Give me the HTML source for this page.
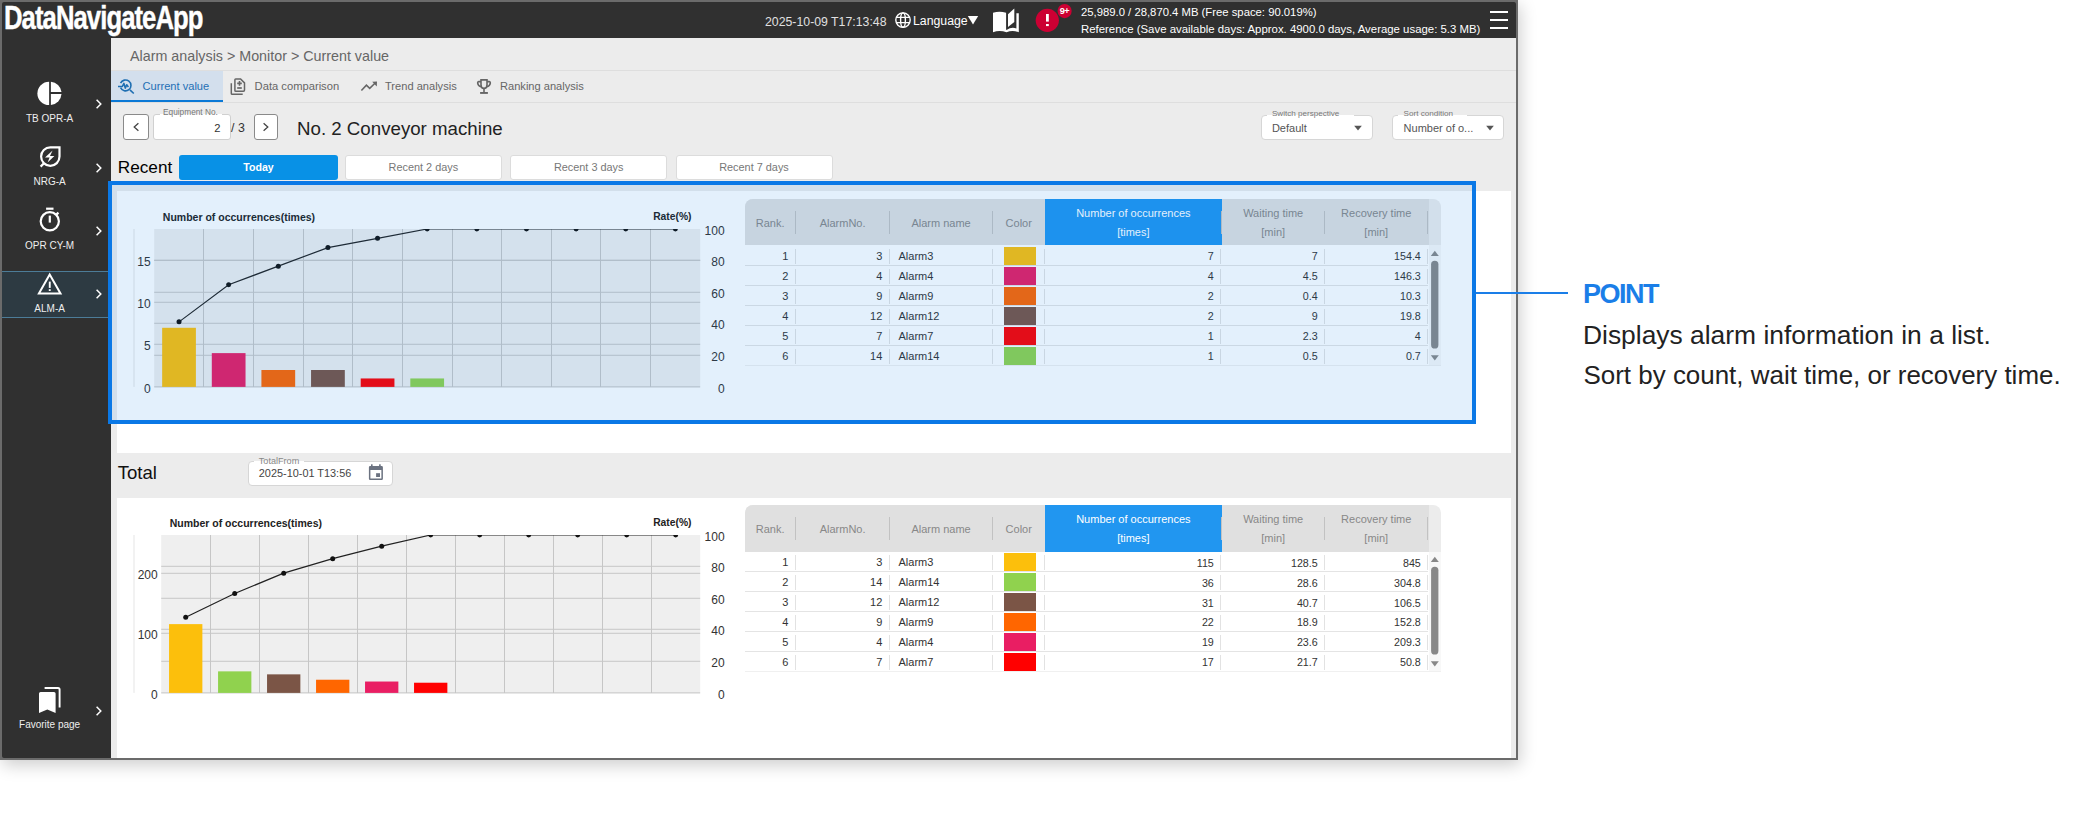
<!DOCTYPE html><html><head><meta charset="utf-8"><style>
html,body{margin:0;padding:0;background:#fff;width:2100px;height:820px;overflow:hidden;font-family:"Liberation Sans", sans-serif;}
</style></head><body>
<div style="position:absolute;left:0px;top:0px;width:1518px;height:760px;box-shadow:2px 5px 16px rgba(0,0,0,0.2);background:#6b6b6b;"></div>
<div style="position:absolute;left:2px;top:2px;width:1514px;height:756px;background:#303030;border-radius:2px;"></div>
<div style="position:absolute;left:4px;top:0.5px;font-size:33px;line-height:33px;font-weight:700;color:#fff;white-space:nowrap;letter-spacing:-1.2px;transform-origin:0 0;transform:scaleX(0.778);-webkit-text-stroke:0.4px #fff;">DataNavigateApp</div>
<div style="position:absolute;left:765px;top:15.74px;font-size:12.3px;line-height:12.3px;font-weight:400;color:#e0e0e0;white-space:nowrap;">2025-10-09 T17:13:48</div>
<svg style="position:absolute;left:893px;top:10px;" width="20" height="20" viewBox="893 10 20 20"><g fill="none" stroke="#fff" stroke-width="1.4"><circle cx="903" cy="20.1" r="7.2"/><ellipse cx="903" cy="20.1" rx="2.4" ry="7.2"/><path d="M896.2 17.4 H909.8 M896.2 22.6 H909.8"/></g></svg>
<div style="position:absolute;left:913px;top:14.94px;font-size:12.3px;line-height:12.3px;font-weight:400;color:#fff;white-space:nowrap;">Language</div>
<svg style="position:absolute;left:966px;top:14px;" width="14" height="12" viewBox="966 14 14 12"><polygon points="967.8,16 978.2,16 973,24.4" fill="#fff"/></svg>
<svg style="position:absolute;left:990px;top:6px;" width="32" height="30" viewBox="990 6 32 30"><g fill="#fff"><path d="M993 12.8 Q999.5 10.8 1006.1 12.8 V29.6 L1006.5 29.9 Q1011.5 26.6 1016.4 28.4 V13.2 H1018.8 V32.2 Q1012.5 29.6 1006.5 32.2 Q999.5 29.6 993 32.2 Z"/><polygon points="1008,14.2 1014.3,8.5 1014.3,22 1008,26.9"/></g></svg>
<svg style="position:absolute;left:1030px;top:2px;" width="46" height="34" viewBox="1030 2 46 34"><circle cx="1047.3" cy="20.35" r="11.6" fill="#cc0033"/><rect x="1046" y="14" width="2.8" height="7.6" fill="#fff"/><rect x="1046" y="24" width="2.8" height="2.1" fill="#fff"/><circle cx="1064.6" cy="11.1" r="7.1" fill="#cc0033"/></svg>
<div style="position:absolute;left:764.5px;width:600px;text-align:center;top:7.08px;font-size:9.2px;line-height:9.2px;font-weight:700;color:#fff;white-space:nowrap;letter-spacing:-0.4px;">9+</div>
<div style="position:absolute;left:1081px;top:6.70px;font-size:11.3px;line-height:11.3px;font-weight:400;color:#fff;white-space:nowrap;">25,989.0 / 28,870.4 MB (Free space: 90.019%)</div>
<div style="position:absolute;left:1081px;top:23.91px;font-size:11.4px;line-height:11.4px;font-weight:400;color:#fff;white-space:nowrap;">Reference (Save available days: Approx. 4900.0 days, Average usage: 5.3 MB)</div>
<div style="position:absolute;left:1490px;top:11.2px;width:18px;height:2px;background:#fff;"></div>
<div style="position:absolute;left:1490px;top:19.2px;width:18px;height:2px;background:#fff;"></div>
<div style="position:absolute;left:1490px;top:27.4px;width:18px;height:2px;background:#fff;"></div>
<div style="position:absolute;left:2px;top:270.6px;width:108.7px;height:47.8px;background:#2d3a42;border-top:1.5px solid #4c7c98;border-bottom:1.5px solid #4c7c98;box-sizing:border-box;"></div>
<svg style="position:absolute;left:36px;top:80px;" width="28" height="28" viewBox="36 80 28 28"><g fill="#fff"><path d="M49.1 81.7 A11.7 11.7 0 0 0 49.1 105.1 Z"/><path d="M50.9 81.8 A11.7 11.7 0 0 1 61.5 92.1 H50.9 Z"/><path d="M50.9 94.1 H61.5 A11.7 11.7 0 0 1 50.9 105 Z"/></g></svg>
<div style="position:absolute;left:-250.4px;width:600px;text-align:center;top:113.50px;font-size:10px;line-height:10px;font-weight:400;color:#eee;white-space:nowrap;">TB OPR-A</div>
<svg style="position:absolute;left:94px;top:98.4px;" width="10" height="12" viewBox="94 98.4 10 12"><polyline points="96.6,100.2 100.8,104.4 96.6,108.60000000000001" fill="none" stroke="#fff" stroke-width="1.5"/></svg>
<svg style="position:absolute;left:36px;top:142px;" width="28" height="28" viewBox="36 142 28 28"><g fill="none" stroke="#fff" stroke-width="2.2"><path d="M50.3 147.4 H59.5 V156.6 A9.2 9.2 0 1 1 50.3 147.4 Z"/><line x1="44" y1="163.2" x2="40.6" y2="166.6"/></g><polygon fill="#fff" points="52.6,150.6 45,157.6 49.6,157.5 47.6,162.6 54.4,156 50,156.1"/></svg>
<div style="position:absolute;left:-250.4px;width:600px;text-align:center;top:177.40px;font-size:10px;line-height:10px;font-weight:400;color:#eee;white-space:nowrap;">NRG-A</div>
<svg style="position:absolute;left:94px;top:161.8px;" width="10" height="12" viewBox="94 161.8 10 12"><polyline points="96.6,163.60000000000002 100.8,167.8 96.6,172.0" fill="none" stroke="#fff" stroke-width="1.5"/></svg>
<svg style="position:absolute;left:36px;top:204px;" width="28" height="32" viewBox="36 204 28 32"><g fill="none" stroke="#fff" stroke-width="2.2"><circle cx="49.8" cy="221.3" r="9.1"/><line x1="49.8" y1="215.6" x2="49.8" y2="222.6"/><line x1="56.4" y1="214.6" x2="58.4" y2="212.6"/></g><rect x="46.1" y="207.6" width="7.4" height="2.2" fill="#fff"/></svg>
<div style="position:absolute;left:-250.4px;width:600px;text-align:center;top:241.40px;font-size:10px;line-height:10px;font-weight:400;color:#eee;white-space:nowrap;">OPR CY-M</div>
<svg style="position:absolute;left:94px;top:225px;" width="10" height="12" viewBox="94 225 10 12"><polyline points="96.6,226.8 100.8,231 96.6,235.2" fill="none" stroke="#fff" stroke-width="1.5"/></svg>
<svg style="position:absolute;left:34px;top:270px;" width="32" height="28" viewBox="34 270 32 28"><polygon points="49.7,274.4 38.9,293.4 60.5,293.4" fill="none" stroke="#fff" stroke-width="2" stroke-linejoin="miter"/><rect x="48.8" y="281.6" width="1.9" height="6.3" fill="#fff"/><rect x="48.8" y="289.2" width="1.9" height="1.8" fill="#fff"/></svg>
<div style="position:absolute;left:-250.4px;width:600px;text-align:center;top:304.10px;font-size:10px;line-height:10px;font-weight:400;color:#eee;white-space:nowrap;">ALM-A</div>
<svg style="position:absolute;left:94px;top:288.4px;" width="10" height="12" viewBox="94 288.4 10 12"><polyline points="96.6,290.2 100.8,294.4 96.6,298.59999999999997" fill="none" stroke="#fff" stroke-width="1.5"/></svg>
<svg style="position:absolute;left:36px;top:684px;" width="28" height="32" viewBox="36 684 28 32"><g fill="#fff"><path d="M40.6 692 H54 Q55.6 692 55.6 693.6 V713 L47.3 709.4 L39 713 V693.6 Q39 692 40.6 692 Z"/></g><path d="M44.6 688 H58 Q59.6 688 59.6 689.6 V707.6" fill="none" stroke="#fff" stroke-width="1.9"/></svg>
<div style="position:absolute;left:-250.4px;width:600px;text-align:center;top:720.10px;font-size:10px;line-height:10px;font-weight:400;color:#eee;white-space:nowrap;">Favorite page</div>
<svg style="position:absolute;left:94px;top:704.7px;" width="10" height="12" viewBox="94 704.7 10 12"><polyline points="96.6,706.5 100.8,710.7 96.6,714.9000000000001" fill="none" stroke="#fff" stroke-width="1.5"/></svg>
<div style="position:absolute;left:110.7px;top:38px;width:1405.3px;height:720px;background:#ececec;"></div>
<div style="position:absolute;left:130px;top:48.55px;font-size:14.3px;line-height:14.3px;font-weight:400;color:#666;white-space:nowrap;">Alarm analysis &gt; Monitor &gt; Current value</div>
<div style="position:absolute;left:110.7px;top:70.4px;width:1405.3px;height:1px;background:#dedede;"></div>
<div style="position:absolute;left:110.7px;top:101.9px;width:1405.3px;height:1px;background:#dedede;"></div>
<div style="position:absolute;left:110.7px;top:71.4px;width:112px;height:28.6px;background:#d3dfed;"></div>
<div style="position:absolute;left:110.7px;top:99.6px;width:112px;height:2.6px;background:#0b79d6;"></div>
<svg style="position:absolute;left:114px;top:76px;" width="24" height="22" viewBox="114 76 24 22"><g fill="none" stroke="#1f6fb2" stroke-width="1.6" stroke-linejoin="round"><path d="M120.56 83.1 A5.45 5.45 0 1 1 120.56 87.7"/><line x1="129.9" y1="89.9" x2="133.8" y2="93.5"/><polyline points="118,86.5 122.3,86.5 123.9,83.4 125.3,88.1 126.7,84.8 128.4,87"/></g></svg>
<div style="position:absolute;left:142.6px;top:81.47px;font-size:11.1px;line-height:11.1px;font-weight:400;color:#1f6fb5;white-space:nowrap;">Current value</div>
<svg style="position:absolute;left:228px;top:76px;" width="20" height="22" viewBox="228 76 20 22"><g fill="none" stroke="#666" stroke-width="1.5"><path d="M235.7 79 H240.6 L244.5 82.9 V90.1 Q244.5 91.2 243.4 91.2 H235.7 Q234.9 91.2 234.9 90.4 V79.8 Q234.9 79 235.7 79 Z"/><path d="M231.3 83.2 V93.4 Q231.3 94.3 232.2 94.3 H242.7"/><path d="M237.2 83.4 H241.8 M239.5 81.1 V85.7" stroke-width="1.6"/><path d="M237.2 88 H241.8" stroke-width="1.7"/></g></svg>
<div style="position:absolute;left:254.6px;top:81.38px;font-size:11.2px;line-height:11.2px;font-weight:400;color:#666;white-space:nowrap;">Data comparison</div>
<svg style="position:absolute;left:358px;top:78px;" width="22" height="16" viewBox="358 78 22 16"><polyline points="361.4,90.5 366.4,85.2 369.7,88.4 375.2,83" fill="none" stroke="#666" stroke-width="1.6"/><polygon points="372.2,81.8 377,81.6 376.8,86.4" fill="#666"/></svg>
<div style="position:absolute;left:385px;top:81.47px;font-size:11.1px;line-height:11.1px;font-weight:400;color:#666;white-space:nowrap;">Trend analysis</div>
<svg style="position:absolute;left:474px;top:77px;" width="20" height="19" viewBox="474 77 20 19"><g fill="none" stroke="#666" stroke-width="1.6"><path d="M481 79.9 H487 V85 Q487 88.4 484 88.4 Q481 88.4 481 85 Z"/><path d="M481 81.6 H478.9 Q477.6 81.6 477.7 83.1 Q478 86 481.2 86.7 M487 81.6 H489.1 Q490.4 81.6 490.3 83.1 Q490 86 486.8 86.7"/><line x1="484" y1="88.4" x2="484" y2="92.2"/></g><rect x="480.1" y="92" width="7.8" height="1.9" fill="#666"/></svg>
<div style="position:absolute;left:500px;top:81.47px;font-size:11.1px;line-height:11.1px;font-weight:400;color:#666;white-space:nowrap;">Ranking analysis</div>
<div style="position:absolute;left:123.3px;top:114px;width:25.4px;height:25.6px;background:#fff;border:1px solid #8a8a8a;border-radius:3px;box-sizing:border-box;"></div>
<svg style="position:absolute;left:130px;top:120px;" width="12" height="14" viewBox="130 120 12 14"><polyline points="138.4,123.2 134.2,127 138.4,130.8" fill="none" stroke="#444" stroke-width="1.3"/></svg>
<div style="position:absolute;left:152.6px;top:114px;width:78.2px;height:25.6px;background:#fff;border:1px solid #d0d0d0;border-radius:3px;box-sizing:border-box;"></div>
<div style="position:absolute;left:160px;top:107px;width:62px;height:7.2px;background:#ececec;"></div>
<div style="position:absolute;left:160px;top:113.5px;width:62px;height:2px;background:#fff;"></div>
<div style="position:absolute;left:163px;top:108.34px;font-size:8.3px;line-height:8.3px;font-weight:400;color:#777;white-space:nowrap;">Equipment No.</div>
<div style="position:absolute;left:-379.6px;width:600px;text-align:right;top:122.78px;font-size:11.2px;line-height:11.2px;font-weight:400;color:#333;white-space:nowrap;">2</div>
<div style="position:absolute;left:231px;top:121.76px;font-size:12.4px;line-height:12.4px;font-weight:400;color:#333;white-space:nowrap;">/ 3</div>
<div style="position:absolute;left:253.5px;top:114px;width:24.2px;height:25.6px;background:#fff;border:1px solid #8a8a8a;border-radius:3px;box-sizing:border-box;"></div>
<svg style="position:absolute;left:260px;top:120px;" width="12" height="14" viewBox="260 120 12 14"><polyline points="263.6,123.2 267.8,127 263.6,130.8" fill="none" stroke="#444" stroke-width="1.3"/></svg>
<div style="position:absolute;left:297px;top:119.61px;font-size:18.7px;line-height:18.7px;font-weight:400;color:#222;white-space:nowrap;">No. 2 Conveyor machine</div>
<div style="position:absolute;left:1260.7px;top:115.2px;width:112px;height:25.3px;background:#fff;border:1px solid #d6d6d6;border-radius:4px;box-sizing:border-box;"></div>
<div style="position:absolute;left:1266.7px;top:109px;width:87px;height:6.4px;background:#ececec;"></div>
<div style="position:absolute;left:1266.7px;top:115px;width:87px;height:1.6px;background:#fff;"></div>
<div style="position:absolute;left:1271.9px;top:109.52px;font-size:8.1px;line-height:8.1px;font-weight:400;color:#777;white-space:nowrap;">Switch perspective</div>
<div style="position:absolute;left:1271.9px;top:122.75px;font-size:11px;line-height:11px;font-weight:400;color:#555;white-space:nowrap;">Default</div>
<svg style="position:absolute;left:1351.8px;top:124px;" width="12" height="8" viewBox="1351.8 124 12 8"><polygon points="1354.0,125.7 1361.6,125.7 1357.8,130.6" fill="#555"/></svg>
<div style="position:absolute;left:1392.4px;top:115.2px;width:112.1px;height:25.3px;background:#fff;border:1px solid #d6d6d6;border-radius:4px;box-sizing:border-box;"></div>
<div style="position:absolute;left:1398.4px;top:109px;width:68.6px;height:6.4px;background:#ececec;"></div>
<div style="position:absolute;left:1398.4px;top:115px;width:68.6px;height:1.6px;background:#fff;"></div>
<div style="position:absolute;left:1403.6000000000001px;top:109.52px;font-size:8.1px;line-height:8.1px;font-weight:400;color:#777;white-space:nowrap;">Sort condition</div>
<div style="position:absolute;left:1403.6000000000001px;top:122.75px;font-size:11px;line-height:11px;font-weight:400;color:#555;white-space:nowrap;">Number of o...</div>
<svg style="position:absolute;left:1483.6px;top:124px;" width="12" height="8" viewBox="1483.6 124 12 8"><polygon points="1485.8,125.7 1493.3999999999999,125.7 1489.6,130.6" fill="#555"/></svg>
<div style="position:absolute;left:117.8px;top:158.78px;font-size:17.2px;line-height:17.2px;font-weight:400;color:#000;white-space:nowrap;">Recent</div>
<div style="position:absolute;left:179.3px;top:155.3px;width:158.5px;height:24.4px;background:#0891e6;border-radius:3px;"></div>
<div style="position:absolute;left:-41.5px;width:600px;text-align:center;top:162.19px;font-size:10.6px;line-height:10.6px;font-weight:700;color:#fff;white-space:nowrap;">Today</div>
<div style="position:absolute;left:344.9px;top:155.3px;width:157.1px;height:24.4px;background:#fff;border:1px solid #dcdcdc;border-radius:3px;box-sizing:border-box;"></div>
<div style="position:absolute;left:123.39999999999998px;width:600px;text-align:center;top:161.94px;font-size:10.9px;line-height:10.9px;font-weight:400;color:#777;white-space:nowrap;">Recent 2 days</div>
<div style="position:absolute;left:510.2px;top:155.3px;width:157.1px;height:24.4px;background:#fff;border:1px solid #dcdcdc;border-radius:3px;box-sizing:border-box;"></div>
<div style="position:absolute;left:288.70000000000005px;width:600px;text-align:center;top:161.94px;font-size:10.9px;line-height:10.9px;font-weight:400;color:#777;white-space:nowrap;">Recent 3 days</div>
<div style="position:absolute;left:675.5px;top:155.3px;width:157.1px;height:24.4px;background:#fff;border:1px solid #dcdcdc;border-radius:3px;box-sizing:border-box;"></div>
<div style="position:absolute;left:454.0px;width:600px;text-align:center;top:161.94px;font-size:10.9px;line-height:10.9px;font-weight:400;color:#777;white-space:nowrap;">Recent 7 days</div>
<div style="position:absolute;left:117px;top:191px;width:1394.4px;height:261.8px;background:#fff;"></div>
<div style="position:absolute;left:117px;top:498px;width:1394.4px;height:260px;background:#fff;"></div>
<div style="position:absolute;left:117.7px;top:463.79px;font-size:18.6px;line-height:18.6px;font-weight:400;color:#111;white-space:nowrap;">Total</div>
<div style="position:absolute;left:247.6px;top:460.6px;width:145.2px;height:25px;background:#fff;border:1px solid #d6d6d6;border-radius:4px;box-sizing:border-box;"></div>
<div style="position:absolute;left:253.7px;top:455px;width:50.3px;height:6.2px;background:#ececec;"></div>
<div style="position:absolute;left:253.7px;top:460.6px;width:50.3px;height:1.6px;background:#fff;"></div>
<div style="position:absolute;left:258.8px;top:456.66px;font-size:9.1px;line-height:9.1px;font-weight:400;color:#888;white-space:nowrap;">TotalFrom</div>
<div style="position:absolute;left:258.8px;top:468.24px;font-size:10.9px;line-height:10.9px;font-weight:400;color:#444;white-space:nowrap;">2025-10-01 T13:56</div>
<svg style="position:absolute;left:366px;top:462px;" width="20" height="20" viewBox="366 462 20 20"><g fill="#6b7280"><path d="M370.2 466 H381.6 Q382.9 466 382.9 467.3 V478.8 Q382.9 480.1 381.6 480.1 H370.2 Q368.9 480.1 368.9 478.8 V467.3 Q368.9 466 370.2 466 Z M370.4 470 V478.6 H381.4 V470 Z"/><rect x="371" y="464.3" width="1.6" height="2.4"/><rect x="379.1" y="464.3" width="1.6" height="2.4"/><rect x="376.1" y="473.2" width="3.9" height="3.8"/></g></svg>
<svg style="position:absolute;left:120px;top:225.2px;" width="600" height="165.90000000000003" viewBox="120 225.2 600 165.90000000000003"><rect x="154.2" y="229.2" width="546.0" height="157.90000000000003" fill="#efefef"/><line x1="154.2" y1="355.50" x2="700.2" y2="355.50" stroke="#c6c6c6" stroke-width="1"/><line x1="154.2" y1="323.50" x2="700.2" y2="323.50" stroke="#c6c6c6" stroke-width="1"/><line x1="154.2" y1="292.50" x2="700.2" y2="292.50" stroke="#c6c6c6" stroke-width="1"/><line x1="154.2" y1="260.50" x2="700.2" y2="260.50" stroke="#c6c6c6" stroke-width="1"/><line x1="154.2" y1="344.50" x2="700.2" y2="344.50" stroke="#c6c6c6" stroke-width="1"/><line x1="154.2" y1="302.50" x2="700.2" y2="302.50" stroke="#c6c6c6" stroke-width="1"/><line x1="154.2" y1="260.50" x2="700.2" y2="260.50" stroke="#c6c6c6" stroke-width="1"/><line x1="203.50" y1="229.2" x2="203.50" y2="387.1" stroke="#c6c6c6" stroke-width="1"/><line x1="253.50" y1="229.2" x2="253.50" y2="387.1" stroke="#c6c6c6" stroke-width="1"/><line x1="303.50" y1="229.2" x2="303.50" y2="387.1" stroke="#c6c6c6" stroke-width="1"/><line x1="352.50" y1="229.2" x2="352.50" y2="387.1" stroke="#c6c6c6" stroke-width="1"/><line x1="402.50" y1="229.2" x2="402.50" y2="387.1" stroke="#c6c6c6" stroke-width="1"/><line x1="452.50" y1="229.2" x2="452.50" y2="387.1" stroke="#c6c6c6" stroke-width="1"/><line x1="501.50" y1="229.2" x2="501.50" y2="387.1" stroke="#c6c6c6" stroke-width="1"/><line x1="551.50" y1="229.2" x2="551.50" y2="387.1" stroke="#c6c6c6" stroke-width="1"/><line x1="600.50" y1="229.2" x2="600.50" y2="387.1" stroke="#c6c6c6" stroke-width="1"/><line x1="650.50" y1="229.2" x2="650.50" y2="387.1" stroke="#c6c6c6" stroke-width="1"/><line x1="154.2" y1="387.1" x2="700.2" y2="387.1" stroke="#c4c4c4" stroke-width="1"/><line x1="134" y1="229.2" x2="134" y2="387.1" stroke="#e6e6e6" stroke-width="1"/><rect x="162.14" y="327.99" width="33.75" height="59.11" fill="#fcbf0c"/><rect x="211.78" y="353.32" width="33.75" height="33.78" fill="#e91e63"/><rect x="261.41" y="370.21" width="33.75" height="16.89" fill="#ff6600"/><rect x="311.05" y="370.21" width="33.75" height="16.89" fill="#7b5546"/><rect x="360.69" y="378.66" width="33.75" height="8.44" fill="#ff0000"/><rect x="410.32" y="378.66" width="33.75" height="8.44" fill="#90d24e"/><clipPath id="clip0"><rect x="154.2" y="229.2" width="546.0" height="157.90000000000003"/></clipPath><g clip-path="url(#clip0)"><polyline points="179.02,322.08 228.65,284.93 278.29,266.35 327.93,247.78 377.56,238.49 427.20,229.20 476.84,229.20 526.47,229.20 576.11,229.20 625.75,229.20 675.38,229.20" fill="none" stroke="#222" stroke-width="1.2"/><circle cx="179.02" cy="322.08" r="2.5" fill="#111"/><circle cx="228.65" cy="284.93" r="2.5" fill="#111"/><circle cx="278.29" cy="266.35" r="2.5" fill="#111"/><circle cx="327.93" cy="247.78" r="2.5" fill="#111"/><circle cx="377.56" cy="238.49" r="2.5" fill="#111"/><circle cx="427.20" cy="229.20" r="2.5" fill="#111"/><circle cx="476.84" cy="229.20" r="2.5" fill="#111"/><circle cx="526.47" cy="229.20" r="2.5" fill="#111"/><circle cx="576.11" cy="229.20" r="2.5" fill="#111"/><circle cx="625.75" cy="229.20" r="2.5" fill="#111"/><circle cx="675.38" cy="229.20" r="2.5" fill="#111"/></g></svg>
<div style="position:absolute;left:-449.3px;width:600px;text-align:right;top:382.50px;font-size:12px;line-height:12px;font-weight:400;color:#333;white-space:nowrap;">0</div>
<div style="position:absolute;left:-449.3px;width:600px;text-align:right;top:340.28px;font-size:12px;line-height:12px;font-weight:400;color:#333;white-space:nowrap;">5</div>
<div style="position:absolute;left:-449.3px;width:600px;text-align:right;top:298.06px;font-size:12px;line-height:12px;font-weight:400;color:#333;white-space:nowrap;">10</div>
<div style="position:absolute;left:-449.3px;width:600px;text-align:right;top:255.84px;font-size:12px;line-height:12px;font-weight:400;color:#333;white-space:nowrap;">15</div>
<div style="position:absolute;left:124.60000000000002px;width:600px;text-align:right;top:382.50px;font-size:12px;line-height:12px;font-weight:400;color:#333;white-space:nowrap;">0</div>
<div style="position:absolute;left:124.60000000000002px;width:600px;text-align:right;top:350.92px;font-size:12px;line-height:12px;font-weight:400;color:#333;white-space:nowrap;">20</div>
<div style="position:absolute;left:124.60000000000002px;width:600px;text-align:right;top:319.34px;font-size:12px;line-height:12px;font-weight:400;color:#333;white-space:nowrap;">40</div>
<div style="position:absolute;left:124.60000000000002px;width:600px;text-align:right;top:287.76px;font-size:12px;line-height:12px;font-weight:400;color:#333;white-space:nowrap;">60</div>
<div style="position:absolute;left:124.60000000000002px;width:600px;text-align:right;top:256.18px;font-size:12px;line-height:12px;font-weight:400;color:#333;white-space:nowrap;">80</div>
<div style="position:absolute;left:124.60000000000002px;width:600px;text-align:right;top:224.60px;font-size:12px;line-height:12px;font-weight:400;color:#333;white-space:nowrap;">100</div>
<div style="position:absolute;left:162.8px;top:212.17px;font-size:10.5px;line-height:10.5px;font-weight:700;color:#222;white-space:nowrap;">Number of occurrences(times)</div>
<div style="position:absolute;left:91.5px;width:600px;text-align:right;top:212.34px;font-size:10.3px;line-height:10.3px;font-weight:700;color:#222;white-space:nowrap;">Rate(%)</div>
<svg style="position:absolute;left:120px;top:531.2px;" width="600" height="165.89999999999998" viewBox="120 531.2 600 165.89999999999998"><rect x="161.2" y="535.2" width="539.0" height="157.89999999999998" fill="#efefef"/><line x1="161.2" y1="661.50" x2="700.2" y2="661.50" stroke="#c6c6c6" stroke-width="1"/><line x1="161.2" y1="629.50" x2="700.2" y2="629.50" stroke="#c6c6c6" stroke-width="1"/><line x1="161.2" y1="598.50" x2="700.2" y2="598.50" stroke="#c6c6c6" stroke-width="1"/><line x1="161.2" y1="566.50" x2="700.2" y2="566.50" stroke="#c6c6c6" stroke-width="1"/><line x1="161.2" y1="633.50" x2="700.2" y2="633.50" stroke="#c6c6c6" stroke-width="1"/><line x1="161.2" y1="573.50" x2="700.2" y2="573.50" stroke="#c6c6c6" stroke-width="1"/><line x1="210.50" y1="535.2" x2="210.50" y2="693.1" stroke="#c6c6c6" stroke-width="1"/><line x1="259.50" y1="535.2" x2="259.50" y2="693.1" stroke="#c6c6c6" stroke-width="1"/><line x1="308.50" y1="535.2" x2="308.50" y2="693.1" stroke="#c6c6c6" stroke-width="1"/><line x1="357.50" y1="535.2" x2="357.50" y2="693.1" stroke="#c6c6c6" stroke-width="1"/><line x1="406.50" y1="535.2" x2="406.50" y2="693.1" stroke="#c6c6c6" stroke-width="1"/><line x1="455.50" y1="535.2" x2="455.50" y2="693.1" stroke="#c6c6c6" stroke-width="1"/><line x1="504.50" y1="535.2" x2="504.50" y2="693.1" stroke="#c6c6c6" stroke-width="1"/><line x1="553.50" y1="535.2" x2="553.50" y2="693.1" stroke="#c6c6c6" stroke-width="1"/><line x1="602.50" y1="535.2" x2="602.50" y2="693.1" stroke="#c6c6c6" stroke-width="1"/><line x1="651.50" y1="535.2" x2="651.50" y2="693.1" stroke="#c6c6c6" stroke-width="1"/><line x1="161.2" y1="693.1" x2="700.2" y2="693.1" stroke="#c4c4c4" stroke-width="1"/><line x1="134" y1="535.2" x2="134" y2="693.1" stroke="#e6e6e6" stroke-width="1"/><rect x="169.04" y="624.32" width="33.32" height="68.78" fill="#fcbf0c"/><rect x="218.04" y="671.57" width="33.32" height="21.53" fill="#90d24e"/><rect x="267.04" y="674.56" width="33.32" height="18.54" fill="#7b5546"/><rect x="316.04" y="679.94" width="33.32" height="13.16" fill="#ff6600"/><rect x="365.04" y="681.74" width="33.32" height="11.36" fill="#e91e63"/><rect x="414.04" y="682.93" width="33.32" height="10.17" fill="#ff0000"/><clipPath id="clip306"><rect x="161.2" y="535.2" width="539.0" height="157.89999999999998"/></clipPath><g clip-path="url(#clip306)"><polyline points="185.70,617.44 234.70,593.75 283.70,573.36 332.70,558.88 381.70,546.38 430.70,535.20 479.70,535.20 528.70,535.20 577.70,535.20 626.70,535.20 675.70,535.20" fill="none" stroke="#222" stroke-width="1.2"/><circle cx="185.70" cy="617.44" r="2.5" fill="#111"/><circle cx="234.70" cy="593.75" r="2.5" fill="#111"/><circle cx="283.70" cy="573.36" r="2.5" fill="#111"/><circle cx="332.70" cy="558.88" r="2.5" fill="#111"/><circle cx="381.70" cy="546.38" r="2.5" fill="#111"/><circle cx="430.70" cy="535.20" r="2.5" fill="#111"/><circle cx="479.70" cy="535.20" r="2.5" fill="#111"/><circle cx="528.70" cy="535.20" r="2.5" fill="#111"/><circle cx="577.70" cy="535.20" r="2.5" fill="#111"/><circle cx="626.70" cy="535.20" r="2.5" fill="#111"/><circle cx="675.70" cy="535.20" r="2.5" fill="#111"/></g></svg>
<div style="position:absolute;left:-442.3px;width:600px;text-align:right;top:688.50px;font-size:12px;line-height:12px;font-weight:400;color:#333;white-space:nowrap;">0</div>
<div style="position:absolute;left:-442.3px;width:600px;text-align:right;top:628.69px;font-size:12px;line-height:12px;font-weight:400;color:#333;white-space:nowrap;">100</div>
<div style="position:absolute;left:-442.3px;width:600px;text-align:right;top:568.88px;font-size:12px;line-height:12px;font-weight:400;color:#333;white-space:nowrap;">200</div>
<div style="position:absolute;left:124.60000000000002px;width:600px;text-align:right;top:688.50px;font-size:12px;line-height:12px;font-weight:400;color:#333;white-space:nowrap;">0</div>
<div style="position:absolute;left:124.60000000000002px;width:600px;text-align:right;top:656.92px;font-size:12px;line-height:12px;font-weight:400;color:#333;white-space:nowrap;">20</div>
<div style="position:absolute;left:124.60000000000002px;width:600px;text-align:right;top:625.34px;font-size:12px;line-height:12px;font-weight:400;color:#333;white-space:nowrap;">40</div>
<div style="position:absolute;left:124.60000000000002px;width:600px;text-align:right;top:593.76px;font-size:12px;line-height:12px;font-weight:400;color:#333;white-space:nowrap;">60</div>
<div style="position:absolute;left:124.60000000000002px;width:600px;text-align:right;top:562.18px;font-size:12px;line-height:12px;font-weight:400;color:#333;white-space:nowrap;">80</div>
<div style="position:absolute;left:124.60000000000002px;width:600px;text-align:right;top:530.60px;font-size:12px;line-height:12px;font-weight:400;color:#333;white-space:nowrap;">100</div>
<div style="position:absolute;left:169.7px;top:518.18px;font-size:10.5px;line-height:10.5px;font-weight:700;color:#222;white-space:nowrap;">Number of occurrences(times)</div>
<div style="position:absolute;left:91.5px;width:600px;text-align:right;top:518.35px;font-size:10.3px;line-height:10.3px;font-weight:700;color:#222;white-space:nowrap;">Rate(%)</div>
<div style="position:absolute;left:744.9px;top:198.9px;width:695.9px;height:46.400000000000006px;background:#ececec;border-radius:8px 8px 0 0;"></div>
<div style="position:absolute;left:744.9px;top:198.9px;width:684.1999999999999px;height:46.400000000000006px;background:#e0e0e0;border-radius:8px 0 0 0;"></div>
<div style="position:absolute;left:1429.1px;top:245.3px;width:11.7px;height:120px;background:#f8f8f8;"></div>
<div style="position:absolute;left:1045px;top:198.9px;width:176.70000000000005px;height:46.400000000000006px;background:#2196f0;"></div>
<div style="position:absolute;left:470.20000000000005px;width:600px;text-align:center;top:217.55px;font-size:11px;line-height:11px;font-weight:400;color:#888;white-space:nowrap;">Rank.</div>
<div style="position:absolute;left:542.6px;width:600px;text-align:center;top:217.55px;font-size:11px;line-height:11px;font-weight:400;color:#888;white-space:nowrap;">AlarmNo.</div>
<div style="position:absolute;left:641.1px;width:600px;text-align:center;top:217.55px;font-size:11px;line-height:11px;font-weight:400;color:#888;white-space:nowrap;">Alarm name</div>
<div style="position:absolute;left:718.75px;width:600px;text-align:center;top:217.55px;font-size:11px;line-height:11px;font-weight:400;color:#888;white-space:nowrap;">Color</div>
<div style="position:absolute;left:833.3499999999999px;width:600px;text-align:center;top:207.65px;font-size:11px;line-height:11px;font-weight:400;color:#fff;white-space:nowrap;">Number of occurrences</div>
<div style="position:absolute;left:833.3499999999999px;width:600px;text-align:center;top:226.85px;font-size:11px;line-height:11px;font-weight:400;color:#fff;white-space:nowrap;">[times]</div>
<div style="position:absolute;left:973.2px;width:600px;text-align:center;top:207.65px;font-size:11px;line-height:11px;font-weight:400;color:#888;white-space:nowrap;">Waiting time</div>
<div style="position:absolute;left:973.2px;width:600px;text-align:center;top:226.85px;font-size:11px;line-height:11px;font-weight:400;color:#888;white-space:nowrap;">[min]</div>
<div style="position:absolute;left:1076.25px;width:600px;text-align:center;top:207.65px;font-size:11px;line-height:11px;font-weight:400;color:#888;white-space:nowrap;">Recovery time</div>
<div style="position:absolute;left:1076.25px;width:600px;text-align:center;top:226.85px;font-size:11px;line-height:11px;font-weight:400;color:#888;white-space:nowrap;">[min]</div>
<div style="position:absolute;left:795.0px;top:210.9px;width:1px;height:23px;background:#c2c2c2;"></div>
<div style="position:absolute;left:889.2px;top:210.9px;width:1px;height:23px;background:#c2c2c2;"></div>
<div style="position:absolute;left:992.0px;top:210.9px;width:1px;height:23px;background:#c2c2c2;"></div>
<div style="position:absolute;left:1324.2px;top:210.9px;width:1px;height:23px;background:#c2c2c2;"></div>
<div style="position:absolute;left:1427.3px;top:210.9px;width:1px;height:23px;background:#c2c2c2;"></div>
<div style="position:absolute;left:1220.6px;top:210.9px;width:1px;height:23px;background:#c2c2c2;"></div>
<div style="position:absolute;left:744.9px;top:245.3px;width:682.9px;height:120px;background:#fff;"></div>
<div style="position:absolute;left:795.0px;top:248.8px;width:1px;height:15px;background:#e2e2e2;"></div>
<div style="position:absolute;left:889.2px;top:248.8px;width:1px;height:15px;background:#e2e2e2;"></div>
<div style="position:absolute;left:992.0px;top:248.8px;width:1px;height:15px;background:#e2e2e2;"></div>
<div style="position:absolute;left:1044.0px;top:248.8px;width:1px;height:15px;background:#e2e2e2;"></div>
<div style="position:absolute;left:1220.1px;top:248.8px;width:1px;height:15px;background:#e2e2e2;"></div>
<div style="position:absolute;left:1324.2px;top:248.8px;width:1px;height:15px;background:#e2e2e2;"></div>
<div style="position:absolute;left:1427.3px;top:248.8px;width:1px;height:15px;background:#e2e2e2;"></div>
<div style="position:absolute;left:188.29999999999995px;width:600px;text-align:right;top:251.05px;font-size:11px;line-height:11px;font-weight:400;color:#333;white-space:nowrap;">1</div>
<div style="position:absolute;left:282.29999999999995px;width:600px;text-align:right;top:251.05px;font-size:11px;line-height:11px;font-weight:400;color:#333;white-space:nowrap;">3</div>
<div style="position:absolute;left:898.5px;top:251.05px;font-size:11px;line-height:11px;font-weight:400;color:#333;white-space:nowrap;">Alarm3</div>
<div style="position:absolute;left:1004.3px;top:247.00000000000003px;width:31.4px;height:17.8px;background:#fcbf0c;"></div>
<div style="position:absolute;left:613.8px;width:600px;text-align:right;top:251.31px;font-size:10.7px;line-height:10.7px;font-weight:400;color:#333;white-space:nowrap;">7</div>
<div style="position:absolute;left:717.7px;width:600px;text-align:right;top:251.31px;font-size:10.7px;line-height:10.7px;font-weight:400;color:#333;white-space:nowrap;">7</div>
<div style="position:absolute;left:820.8px;width:600px;text-align:right;top:251.31px;font-size:10.7px;line-height:10.7px;font-weight:400;color:#333;white-space:nowrap;">154.4</div>
<div style="position:absolute;left:744.9px;top:264.95px;width:682.9px;height:1.2px;background:#e4e4e4;"></div>
<div style="position:absolute;left:795.0px;top:268.75px;width:1px;height:15px;background:#e2e2e2;"></div>
<div style="position:absolute;left:889.2px;top:268.75px;width:1px;height:15px;background:#e2e2e2;"></div>
<div style="position:absolute;left:992.0px;top:268.75px;width:1px;height:15px;background:#e2e2e2;"></div>
<div style="position:absolute;left:1044.0px;top:268.75px;width:1px;height:15px;background:#e2e2e2;"></div>
<div style="position:absolute;left:1220.1px;top:268.75px;width:1px;height:15px;background:#e2e2e2;"></div>
<div style="position:absolute;left:1324.2px;top:268.75px;width:1px;height:15px;background:#e2e2e2;"></div>
<div style="position:absolute;left:1427.3px;top:268.75px;width:1px;height:15px;background:#e2e2e2;"></div>
<div style="position:absolute;left:188.29999999999995px;width:600px;text-align:right;top:271.00px;font-size:11px;line-height:11px;font-weight:400;color:#333;white-space:nowrap;">2</div>
<div style="position:absolute;left:282.29999999999995px;width:600px;text-align:right;top:271.00px;font-size:11px;line-height:11px;font-weight:400;color:#333;white-space:nowrap;">4</div>
<div style="position:absolute;left:898.5px;top:271.00px;font-size:11px;line-height:11px;font-weight:400;color:#333;white-space:nowrap;">Alarm4</div>
<div style="position:absolute;left:1004.3px;top:266.95px;width:31.4px;height:17.8px;background:#e91e63;"></div>
<div style="position:absolute;left:613.8px;width:600px;text-align:right;top:271.25px;font-size:10.7px;line-height:10.7px;font-weight:400;color:#333;white-space:nowrap;">4</div>
<div style="position:absolute;left:717.7px;width:600px;text-align:right;top:271.25px;font-size:10.7px;line-height:10.7px;font-weight:400;color:#333;white-space:nowrap;">4.5</div>
<div style="position:absolute;left:820.8px;width:600px;text-align:right;top:271.25px;font-size:10.7px;line-height:10.7px;font-weight:400;color:#333;white-space:nowrap;">146.3</div>
<div style="position:absolute;left:744.9px;top:284.9px;width:682.9px;height:1.2px;background:#e4e4e4;"></div>
<div style="position:absolute;left:795.0px;top:288.7px;width:1px;height:15px;background:#e2e2e2;"></div>
<div style="position:absolute;left:889.2px;top:288.7px;width:1px;height:15px;background:#e2e2e2;"></div>
<div style="position:absolute;left:992.0px;top:288.7px;width:1px;height:15px;background:#e2e2e2;"></div>
<div style="position:absolute;left:1044.0px;top:288.7px;width:1px;height:15px;background:#e2e2e2;"></div>
<div style="position:absolute;left:1220.1px;top:288.7px;width:1px;height:15px;background:#e2e2e2;"></div>
<div style="position:absolute;left:1324.2px;top:288.7px;width:1px;height:15px;background:#e2e2e2;"></div>
<div style="position:absolute;left:1427.3px;top:288.7px;width:1px;height:15px;background:#e2e2e2;"></div>
<div style="position:absolute;left:188.29999999999995px;width:600px;text-align:right;top:290.95px;font-size:11px;line-height:11px;font-weight:400;color:#333;white-space:nowrap;">3</div>
<div style="position:absolute;left:282.29999999999995px;width:600px;text-align:right;top:290.95px;font-size:11px;line-height:11px;font-weight:400;color:#333;white-space:nowrap;">9</div>
<div style="position:absolute;left:898.5px;top:290.95px;font-size:11px;line-height:11px;font-weight:400;color:#333;white-space:nowrap;">Alarm9</div>
<div style="position:absolute;left:1004.3px;top:286.9px;width:31.4px;height:17.8px;background:#ff6600;"></div>
<div style="position:absolute;left:613.8px;width:600px;text-align:right;top:291.21px;font-size:10.7px;line-height:10.7px;font-weight:400;color:#333;white-space:nowrap;">2</div>
<div style="position:absolute;left:717.7px;width:600px;text-align:right;top:291.21px;font-size:10.7px;line-height:10.7px;font-weight:400;color:#333;white-space:nowrap;">0.4</div>
<div style="position:absolute;left:820.8px;width:600px;text-align:right;top:291.21px;font-size:10.7px;line-height:10.7px;font-weight:400;color:#333;white-space:nowrap;">10.3</div>
<div style="position:absolute;left:744.9px;top:304.85px;width:682.9px;height:1.2px;background:#e4e4e4;"></div>
<div style="position:absolute;left:795.0px;top:308.65000000000003px;width:1px;height:15px;background:#e2e2e2;"></div>
<div style="position:absolute;left:889.2px;top:308.65000000000003px;width:1px;height:15px;background:#e2e2e2;"></div>
<div style="position:absolute;left:992.0px;top:308.65000000000003px;width:1px;height:15px;background:#e2e2e2;"></div>
<div style="position:absolute;left:1044.0px;top:308.65000000000003px;width:1px;height:15px;background:#e2e2e2;"></div>
<div style="position:absolute;left:1220.1px;top:308.65000000000003px;width:1px;height:15px;background:#e2e2e2;"></div>
<div style="position:absolute;left:1324.2px;top:308.65000000000003px;width:1px;height:15px;background:#e2e2e2;"></div>
<div style="position:absolute;left:1427.3px;top:308.65000000000003px;width:1px;height:15px;background:#e2e2e2;"></div>
<div style="position:absolute;left:188.29999999999995px;width:600px;text-align:right;top:310.90px;font-size:11px;line-height:11px;font-weight:400;color:#333;white-space:nowrap;">4</div>
<div style="position:absolute;left:282.29999999999995px;width:600px;text-align:right;top:310.90px;font-size:11px;line-height:11px;font-weight:400;color:#333;white-space:nowrap;">12</div>
<div style="position:absolute;left:898.5px;top:310.90px;font-size:11px;line-height:11px;font-weight:400;color:#333;white-space:nowrap;">Alarm12</div>
<div style="position:absolute;left:1004.3px;top:306.85px;width:31.4px;height:17.8px;background:#7b5546;"></div>
<div style="position:absolute;left:613.8px;width:600px;text-align:right;top:311.16px;font-size:10.7px;line-height:10.7px;font-weight:400;color:#333;white-space:nowrap;">2</div>
<div style="position:absolute;left:717.7px;width:600px;text-align:right;top:311.16px;font-size:10.7px;line-height:10.7px;font-weight:400;color:#333;white-space:nowrap;">9</div>
<div style="position:absolute;left:820.8px;width:600px;text-align:right;top:311.16px;font-size:10.7px;line-height:10.7px;font-weight:400;color:#333;white-space:nowrap;">19.8</div>
<div style="position:absolute;left:744.9px;top:324.8px;width:682.9px;height:1.2px;background:#e4e4e4;"></div>
<div style="position:absolute;left:795.0px;top:328.6px;width:1px;height:15px;background:#e2e2e2;"></div>
<div style="position:absolute;left:889.2px;top:328.6px;width:1px;height:15px;background:#e2e2e2;"></div>
<div style="position:absolute;left:992.0px;top:328.6px;width:1px;height:15px;background:#e2e2e2;"></div>
<div style="position:absolute;left:1044.0px;top:328.6px;width:1px;height:15px;background:#e2e2e2;"></div>
<div style="position:absolute;left:1220.1px;top:328.6px;width:1px;height:15px;background:#e2e2e2;"></div>
<div style="position:absolute;left:1324.2px;top:328.6px;width:1px;height:15px;background:#e2e2e2;"></div>
<div style="position:absolute;left:1427.3px;top:328.6px;width:1px;height:15px;background:#e2e2e2;"></div>
<div style="position:absolute;left:188.29999999999995px;width:600px;text-align:right;top:330.85px;font-size:11px;line-height:11px;font-weight:400;color:#333;white-space:nowrap;">5</div>
<div style="position:absolute;left:282.29999999999995px;width:600px;text-align:right;top:330.85px;font-size:11px;line-height:11px;font-weight:400;color:#333;white-space:nowrap;">7</div>
<div style="position:absolute;left:898.5px;top:330.85px;font-size:11px;line-height:11px;font-weight:400;color:#333;white-space:nowrap;">Alarm7</div>
<div style="position:absolute;left:1004.3px;top:326.8px;width:31.4px;height:17.8px;background:#ff0000;"></div>
<div style="position:absolute;left:613.8px;width:600px;text-align:right;top:331.11px;font-size:10.7px;line-height:10.7px;font-weight:400;color:#333;white-space:nowrap;">1</div>
<div style="position:absolute;left:717.7px;width:600px;text-align:right;top:331.11px;font-size:10.7px;line-height:10.7px;font-weight:400;color:#333;white-space:nowrap;">2.3</div>
<div style="position:absolute;left:820.8px;width:600px;text-align:right;top:331.11px;font-size:10.7px;line-height:10.7px;font-weight:400;color:#333;white-space:nowrap;">4</div>
<div style="position:absolute;left:744.9px;top:344.75px;width:682.9px;height:1.2px;background:#e4e4e4;"></div>
<div style="position:absolute;left:795.0px;top:348.55px;width:1px;height:15px;background:#e2e2e2;"></div>
<div style="position:absolute;left:889.2px;top:348.55px;width:1px;height:15px;background:#e2e2e2;"></div>
<div style="position:absolute;left:992.0px;top:348.55px;width:1px;height:15px;background:#e2e2e2;"></div>
<div style="position:absolute;left:1044.0px;top:348.55px;width:1px;height:15px;background:#e2e2e2;"></div>
<div style="position:absolute;left:1220.1px;top:348.55px;width:1px;height:15px;background:#e2e2e2;"></div>
<div style="position:absolute;left:1324.2px;top:348.55px;width:1px;height:15px;background:#e2e2e2;"></div>
<div style="position:absolute;left:1427.3px;top:348.55px;width:1px;height:15px;background:#e2e2e2;"></div>
<div style="position:absolute;left:188.29999999999995px;width:600px;text-align:right;top:350.80px;font-size:11px;line-height:11px;font-weight:400;color:#333;white-space:nowrap;">6</div>
<div style="position:absolute;left:282.29999999999995px;width:600px;text-align:right;top:350.80px;font-size:11px;line-height:11px;font-weight:400;color:#333;white-space:nowrap;">14</div>
<div style="position:absolute;left:898.5px;top:350.80px;font-size:11px;line-height:11px;font-weight:400;color:#333;white-space:nowrap;">Alarm14</div>
<div style="position:absolute;left:1004.3px;top:346.75px;width:31.4px;height:17.8px;background:#90d24e;"></div>
<div style="position:absolute;left:613.8px;width:600px;text-align:right;top:351.06px;font-size:10.7px;line-height:10.7px;font-weight:400;color:#333;white-space:nowrap;">1</div>
<div style="position:absolute;left:717.7px;width:600px;text-align:right;top:351.06px;font-size:10.7px;line-height:10.7px;font-weight:400;color:#333;white-space:nowrap;">0.5</div>
<div style="position:absolute;left:820.8px;width:600px;text-align:right;top:351.06px;font-size:10.7px;line-height:10.7px;font-weight:400;color:#333;white-space:nowrap;">0.7</div>
<div style="position:absolute;left:744.9px;top:364.7px;width:695.9px;height:1.2px;background:#f0f0f0;"></div>
<svg style="position:absolute;left:1429px;top:248px;" width="12" height="120" viewBox="1429 248 12 120"><polygon points="1430.8,255.9 1438.8,255.9 1434.8,250.7" fill="#888"/><rect x="1431.1" y="260.7" width="7.3" height="87.8" rx="3.6" fill="#888"/><polygon points="1430.8,355.2 1438.8,355.2 1434.8,360.4" fill="#888"/></svg>
<div style="position:absolute;left:744.9px;top:505.20000000000005px;width:695.9px;height:46.39999999999998px;background:#ececec;border-radius:8px 8px 0 0;"></div>
<div style="position:absolute;left:744.9px;top:505.20000000000005px;width:684.1999999999999px;height:46.39999999999998px;background:#e0e0e0;border-radius:8px 0 0 0;"></div>
<div style="position:absolute;left:1429.1px;top:551.6px;width:11.7px;height:120px;background:#f8f8f8;"></div>
<div style="position:absolute;left:1045px;top:505.20000000000005px;width:176.70000000000005px;height:46.39999999999998px;background:#2196f0;"></div>
<div style="position:absolute;left:470.20000000000005px;width:600px;text-align:center;top:523.85px;font-size:11px;line-height:11px;font-weight:400;color:#888;white-space:nowrap;">Rank.</div>
<div style="position:absolute;left:542.6px;width:600px;text-align:center;top:523.85px;font-size:11px;line-height:11px;font-weight:400;color:#888;white-space:nowrap;">AlarmNo.</div>
<div style="position:absolute;left:641.1px;width:600px;text-align:center;top:523.85px;font-size:11px;line-height:11px;font-weight:400;color:#888;white-space:nowrap;">Alarm name</div>
<div style="position:absolute;left:718.75px;width:600px;text-align:center;top:523.85px;font-size:11px;line-height:11px;font-weight:400;color:#888;white-space:nowrap;">Color</div>
<div style="position:absolute;left:833.3499999999999px;width:600px;text-align:center;top:513.95px;font-size:11px;line-height:11px;font-weight:400;color:#fff;white-space:nowrap;">Number of occurrences</div>
<div style="position:absolute;left:833.3499999999999px;width:600px;text-align:center;top:533.15px;font-size:11px;line-height:11px;font-weight:400;color:#fff;white-space:nowrap;">[times]</div>
<div style="position:absolute;left:973.2px;width:600px;text-align:center;top:513.95px;font-size:11px;line-height:11px;font-weight:400;color:#888;white-space:nowrap;">Waiting time</div>
<div style="position:absolute;left:973.2px;width:600px;text-align:center;top:533.15px;font-size:11px;line-height:11px;font-weight:400;color:#888;white-space:nowrap;">[min]</div>
<div style="position:absolute;left:1076.25px;width:600px;text-align:center;top:513.95px;font-size:11px;line-height:11px;font-weight:400;color:#888;white-space:nowrap;">Recovery time</div>
<div style="position:absolute;left:1076.25px;width:600px;text-align:center;top:533.15px;font-size:11px;line-height:11px;font-weight:400;color:#888;white-space:nowrap;">[min]</div>
<div style="position:absolute;left:795.0px;top:517.2px;width:1px;height:23px;background:#c2c2c2;"></div>
<div style="position:absolute;left:889.2px;top:517.2px;width:1px;height:23px;background:#c2c2c2;"></div>
<div style="position:absolute;left:992.0px;top:517.2px;width:1px;height:23px;background:#c2c2c2;"></div>
<div style="position:absolute;left:1324.2px;top:517.2px;width:1px;height:23px;background:#c2c2c2;"></div>
<div style="position:absolute;left:1427.3px;top:517.2px;width:1px;height:23px;background:#c2c2c2;"></div>
<div style="position:absolute;left:1220.6px;top:517.2px;width:1px;height:23px;background:#c2c2c2;"></div>
<div style="position:absolute;left:744.9px;top:551.6px;width:682.9px;height:120px;background:#fff;"></div>
<div style="position:absolute;left:795.0px;top:555.1px;width:1px;height:15px;background:#e2e2e2;"></div>
<div style="position:absolute;left:889.2px;top:555.1px;width:1px;height:15px;background:#e2e2e2;"></div>
<div style="position:absolute;left:992.0px;top:555.1px;width:1px;height:15px;background:#e2e2e2;"></div>
<div style="position:absolute;left:1044.0px;top:555.1px;width:1px;height:15px;background:#e2e2e2;"></div>
<div style="position:absolute;left:1220.1px;top:555.1px;width:1px;height:15px;background:#e2e2e2;"></div>
<div style="position:absolute;left:1324.2px;top:555.1px;width:1px;height:15px;background:#e2e2e2;"></div>
<div style="position:absolute;left:1427.3px;top:555.1px;width:1px;height:15px;background:#e2e2e2;"></div>
<div style="position:absolute;left:188.29999999999995px;width:600px;text-align:right;top:557.35px;font-size:11px;line-height:11px;font-weight:400;color:#333;white-space:nowrap;">1</div>
<div style="position:absolute;left:282.29999999999995px;width:600px;text-align:right;top:557.35px;font-size:11px;line-height:11px;font-weight:400;color:#333;white-space:nowrap;">3</div>
<div style="position:absolute;left:898.5px;top:557.35px;font-size:11px;line-height:11px;font-weight:400;color:#333;white-space:nowrap;">Alarm3</div>
<div style="position:absolute;left:1004.3px;top:553.3px;width:31.4px;height:17.8px;background:#fcbf0c;"></div>
<div style="position:absolute;left:613.8px;width:600px;text-align:right;top:557.60px;font-size:10.7px;line-height:10.7px;font-weight:400;color:#333;white-space:nowrap;">115</div>
<div style="position:absolute;left:717.7px;width:600px;text-align:right;top:557.60px;font-size:10.7px;line-height:10.7px;font-weight:400;color:#333;white-space:nowrap;">128.5</div>
<div style="position:absolute;left:820.8px;width:600px;text-align:right;top:557.60px;font-size:10.7px;line-height:10.7px;font-weight:400;color:#333;white-space:nowrap;">845</div>
<div style="position:absolute;left:744.9px;top:571.25px;width:682.9px;height:1.2px;background:#e4e4e4;"></div>
<div style="position:absolute;left:795.0px;top:575.0500000000001px;width:1px;height:15px;background:#e2e2e2;"></div>
<div style="position:absolute;left:889.2px;top:575.0500000000001px;width:1px;height:15px;background:#e2e2e2;"></div>
<div style="position:absolute;left:992.0px;top:575.0500000000001px;width:1px;height:15px;background:#e2e2e2;"></div>
<div style="position:absolute;left:1044.0px;top:575.0500000000001px;width:1px;height:15px;background:#e2e2e2;"></div>
<div style="position:absolute;left:1220.1px;top:575.0500000000001px;width:1px;height:15px;background:#e2e2e2;"></div>
<div style="position:absolute;left:1324.2px;top:575.0500000000001px;width:1px;height:15px;background:#e2e2e2;"></div>
<div style="position:absolute;left:1427.3px;top:575.0500000000001px;width:1px;height:15px;background:#e2e2e2;"></div>
<div style="position:absolute;left:188.29999999999995px;width:600px;text-align:right;top:577.30px;font-size:11px;line-height:11px;font-weight:400;color:#333;white-space:nowrap;">2</div>
<div style="position:absolute;left:282.29999999999995px;width:600px;text-align:right;top:577.30px;font-size:11px;line-height:11px;font-weight:400;color:#333;white-space:nowrap;">14</div>
<div style="position:absolute;left:898.5px;top:577.30px;font-size:11px;line-height:11px;font-weight:400;color:#333;white-space:nowrap;">Alarm14</div>
<div style="position:absolute;left:1004.3px;top:573.25px;width:31.4px;height:17.8px;background:#90d24e;"></div>
<div style="position:absolute;left:613.8px;width:600px;text-align:right;top:577.55px;font-size:10.7px;line-height:10.7px;font-weight:400;color:#333;white-space:nowrap;">36</div>
<div style="position:absolute;left:717.7px;width:600px;text-align:right;top:577.55px;font-size:10.7px;line-height:10.7px;font-weight:400;color:#333;white-space:nowrap;">28.6</div>
<div style="position:absolute;left:820.8px;width:600px;text-align:right;top:577.55px;font-size:10.7px;line-height:10.7px;font-weight:400;color:#333;white-space:nowrap;">304.8</div>
<div style="position:absolute;left:744.9px;top:591.1999999999999px;width:682.9px;height:1.2px;background:#e4e4e4;"></div>
<div style="position:absolute;left:795.0px;top:595.0px;width:1px;height:15px;background:#e2e2e2;"></div>
<div style="position:absolute;left:889.2px;top:595.0px;width:1px;height:15px;background:#e2e2e2;"></div>
<div style="position:absolute;left:992.0px;top:595.0px;width:1px;height:15px;background:#e2e2e2;"></div>
<div style="position:absolute;left:1044.0px;top:595.0px;width:1px;height:15px;background:#e2e2e2;"></div>
<div style="position:absolute;left:1220.1px;top:595.0px;width:1px;height:15px;background:#e2e2e2;"></div>
<div style="position:absolute;left:1324.2px;top:595.0px;width:1px;height:15px;background:#e2e2e2;"></div>
<div style="position:absolute;left:1427.3px;top:595.0px;width:1px;height:15px;background:#e2e2e2;"></div>
<div style="position:absolute;left:188.29999999999995px;width:600px;text-align:right;top:597.25px;font-size:11px;line-height:11px;font-weight:400;color:#333;white-space:nowrap;">3</div>
<div style="position:absolute;left:282.29999999999995px;width:600px;text-align:right;top:597.25px;font-size:11px;line-height:11px;font-weight:400;color:#333;white-space:nowrap;">12</div>
<div style="position:absolute;left:898.5px;top:597.25px;font-size:11px;line-height:11px;font-weight:400;color:#333;white-space:nowrap;">Alarm12</div>
<div style="position:absolute;left:1004.3px;top:593.1999999999999px;width:31.4px;height:17.8px;background:#7b5546;"></div>
<div style="position:absolute;left:613.8px;width:600px;text-align:right;top:597.50px;font-size:10.7px;line-height:10.7px;font-weight:400;color:#333;white-space:nowrap;">31</div>
<div style="position:absolute;left:717.7px;width:600px;text-align:right;top:597.50px;font-size:10.7px;line-height:10.7px;font-weight:400;color:#333;white-space:nowrap;">40.7</div>
<div style="position:absolute;left:820.8px;width:600px;text-align:right;top:597.50px;font-size:10.7px;line-height:10.7px;font-weight:400;color:#333;white-space:nowrap;">106.5</div>
<div style="position:absolute;left:744.9px;top:611.15px;width:682.9px;height:1.2px;background:#e4e4e4;"></div>
<div style="position:absolute;left:795.0px;top:614.95px;width:1px;height:15px;background:#e2e2e2;"></div>
<div style="position:absolute;left:889.2px;top:614.95px;width:1px;height:15px;background:#e2e2e2;"></div>
<div style="position:absolute;left:992.0px;top:614.95px;width:1px;height:15px;background:#e2e2e2;"></div>
<div style="position:absolute;left:1044.0px;top:614.95px;width:1px;height:15px;background:#e2e2e2;"></div>
<div style="position:absolute;left:1220.1px;top:614.95px;width:1px;height:15px;background:#e2e2e2;"></div>
<div style="position:absolute;left:1324.2px;top:614.95px;width:1px;height:15px;background:#e2e2e2;"></div>
<div style="position:absolute;left:1427.3px;top:614.95px;width:1px;height:15px;background:#e2e2e2;"></div>
<div style="position:absolute;left:188.29999999999995px;width:600px;text-align:right;top:617.20px;font-size:11px;line-height:11px;font-weight:400;color:#333;white-space:nowrap;">4</div>
<div style="position:absolute;left:282.29999999999995px;width:600px;text-align:right;top:617.20px;font-size:11px;line-height:11px;font-weight:400;color:#333;white-space:nowrap;">9</div>
<div style="position:absolute;left:898.5px;top:617.20px;font-size:11px;line-height:11px;font-weight:400;color:#333;white-space:nowrap;">Alarm9</div>
<div style="position:absolute;left:1004.3px;top:613.15px;width:31.4px;height:17.8px;background:#ff6600;"></div>
<div style="position:absolute;left:613.8px;width:600px;text-align:right;top:617.45px;font-size:10.7px;line-height:10.7px;font-weight:400;color:#333;white-space:nowrap;">22</div>
<div style="position:absolute;left:717.7px;width:600px;text-align:right;top:617.45px;font-size:10.7px;line-height:10.7px;font-weight:400;color:#333;white-space:nowrap;">18.9</div>
<div style="position:absolute;left:820.8px;width:600px;text-align:right;top:617.45px;font-size:10.7px;line-height:10.7px;font-weight:400;color:#333;white-space:nowrap;">152.8</div>
<div style="position:absolute;left:744.9px;top:631.0999999999999px;width:682.9px;height:1.2px;background:#e4e4e4;"></div>
<div style="position:absolute;left:795.0px;top:634.9px;width:1px;height:15px;background:#e2e2e2;"></div>
<div style="position:absolute;left:889.2px;top:634.9px;width:1px;height:15px;background:#e2e2e2;"></div>
<div style="position:absolute;left:992.0px;top:634.9px;width:1px;height:15px;background:#e2e2e2;"></div>
<div style="position:absolute;left:1044.0px;top:634.9px;width:1px;height:15px;background:#e2e2e2;"></div>
<div style="position:absolute;left:1220.1px;top:634.9px;width:1px;height:15px;background:#e2e2e2;"></div>
<div style="position:absolute;left:1324.2px;top:634.9px;width:1px;height:15px;background:#e2e2e2;"></div>
<div style="position:absolute;left:1427.3px;top:634.9px;width:1px;height:15px;background:#e2e2e2;"></div>
<div style="position:absolute;left:188.29999999999995px;width:600px;text-align:right;top:637.15px;font-size:11px;line-height:11px;font-weight:400;color:#333;white-space:nowrap;">5</div>
<div style="position:absolute;left:282.29999999999995px;width:600px;text-align:right;top:637.15px;font-size:11px;line-height:11px;font-weight:400;color:#333;white-space:nowrap;">4</div>
<div style="position:absolute;left:898.5px;top:637.15px;font-size:11px;line-height:11px;font-weight:400;color:#333;white-space:nowrap;">Alarm4</div>
<div style="position:absolute;left:1004.3px;top:633.0999999999999px;width:31.4px;height:17.8px;background:#e91e63;"></div>
<div style="position:absolute;left:613.8px;width:600px;text-align:right;top:637.40px;font-size:10.7px;line-height:10.7px;font-weight:400;color:#333;white-space:nowrap;">19</div>
<div style="position:absolute;left:717.7px;width:600px;text-align:right;top:637.40px;font-size:10.7px;line-height:10.7px;font-weight:400;color:#333;white-space:nowrap;">23.6</div>
<div style="position:absolute;left:820.8px;width:600px;text-align:right;top:637.40px;font-size:10.7px;line-height:10.7px;font-weight:400;color:#333;white-space:nowrap;">209.3</div>
<div style="position:absolute;left:744.9px;top:651.05px;width:682.9px;height:1.2px;background:#e4e4e4;"></div>
<div style="position:absolute;left:795.0px;top:654.85px;width:1px;height:15px;background:#e2e2e2;"></div>
<div style="position:absolute;left:889.2px;top:654.85px;width:1px;height:15px;background:#e2e2e2;"></div>
<div style="position:absolute;left:992.0px;top:654.85px;width:1px;height:15px;background:#e2e2e2;"></div>
<div style="position:absolute;left:1044.0px;top:654.85px;width:1px;height:15px;background:#e2e2e2;"></div>
<div style="position:absolute;left:1220.1px;top:654.85px;width:1px;height:15px;background:#e2e2e2;"></div>
<div style="position:absolute;left:1324.2px;top:654.85px;width:1px;height:15px;background:#e2e2e2;"></div>
<div style="position:absolute;left:1427.3px;top:654.85px;width:1px;height:15px;background:#e2e2e2;"></div>
<div style="position:absolute;left:188.29999999999995px;width:600px;text-align:right;top:657.10px;font-size:11px;line-height:11px;font-weight:400;color:#333;white-space:nowrap;">6</div>
<div style="position:absolute;left:282.29999999999995px;width:600px;text-align:right;top:657.10px;font-size:11px;line-height:11px;font-weight:400;color:#333;white-space:nowrap;">7</div>
<div style="position:absolute;left:898.5px;top:657.10px;font-size:11px;line-height:11px;font-weight:400;color:#333;white-space:nowrap;">Alarm7</div>
<div style="position:absolute;left:1004.3px;top:653.05px;width:31.4px;height:17.8px;background:#ff0000;"></div>
<div style="position:absolute;left:613.8px;width:600px;text-align:right;top:657.35px;font-size:10.7px;line-height:10.7px;font-weight:400;color:#333;white-space:nowrap;">17</div>
<div style="position:absolute;left:717.7px;width:600px;text-align:right;top:657.35px;font-size:10.7px;line-height:10.7px;font-weight:400;color:#333;white-space:nowrap;">21.7</div>
<div style="position:absolute;left:820.8px;width:600px;text-align:right;top:657.35px;font-size:10.7px;line-height:10.7px;font-weight:400;color:#333;white-space:nowrap;">50.8</div>
<div style="position:absolute;left:744.9px;top:670.9999999999999px;width:695.9px;height:1.2px;background:#f0f0f0;"></div>
<svg style="position:absolute;left:1429px;top:554.3px;" width="12" height="120" viewBox="1429 554.3 12 120"><polygon points="1430.8,562.2 1438.8,562.2 1434.8,557.0" fill="#888"/><rect x="1431.1" y="567.0" width="7.3" height="87.8" rx="3.6" fill="#888"/><polygon points="1430.8,661.5 1438.8,661.5 1434.8,666.7" fill="#888"/></svg>
<div style="position:absolute;left:108.2px;top:181.1px;width:1367.6px;height:242.9px;border:4px solid #0a78e6;background:rgba(0,115,230,0.11);box-sizing:border-box;"></div>
<div style="position:absolute;left:1475.8px;top:292.1px;width:92.4px;height:1.8px;background:#1a7ee8;"></div>
<div style="position:absolute;left:1583px;top:280.65px;font-size:27px;line-height:27px;font-weight:700;color:#1a7ee8;white-space:nowrap;letter-spacing:-1.5px;">POINT</div>
<div style="position:absolute;left:1583px;top:322.26px;font-size:26.4px;line-height:26.4px;font-weight:400;color:#222;white-space:nowrap;">Displays alarm information in a list.</div>
<div style="position:absolute;left:1583.5px;top:362.94px;font-size:25.95px;line-height:25.95px;font-weight:400;color:#222;white-space:nowrap;">Sort by count, wait time, or recovery time.</div>
</body></html>
